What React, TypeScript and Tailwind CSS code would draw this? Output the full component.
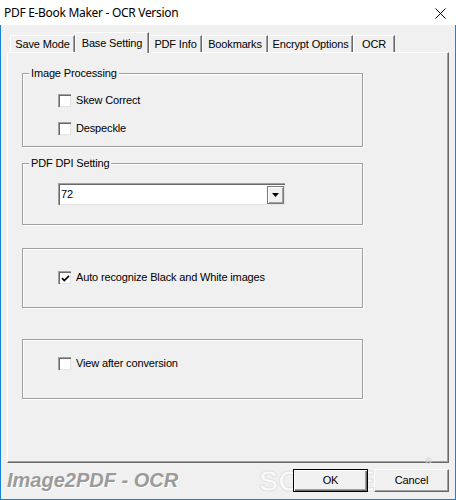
import React from 'react';

const tabs = [
  { label: 'Save Mode', w: 'w-[65px]' },
  { label: 'Base Setting', w: 'w-[74px]', active: true },
  { label: 'PDF Info', w: 'w-[53px]' },
  { label: 'Bookmarks', w: 'w-[66px]' },
  { label: 'Encrypt Options', w: 'w-[85px]' },
  { label: 'OCR', w: 'w-[42px]' },
];

const Group: React.FC<{ label?: string; className: string; children: React.ReactNode }> = ({ label, className, children }) => (
  <div className={`relative w-[341px] border border-[#a0a0a0] shadow-[1px_1px_0_#fff,inset_1px_1px_0_#fff] ${className}`}>
    {label && (
      <span className="absolute left-[6px] -top-[7px] px-[2px] bg-[#f0f0f0] leading-[13px]">{label}</span>
    )}
    {children}
  </div>
);

const CheckBox: React.FC<{ label: string; checked?: boolean; className?: string }> = ({ label, checked, className = '' }) => (
  <div className={`flex items-center h-[13px] gap-[5px] ${className}`}>
    <div className="w-[13px] h-[13px] bg-white border-t border-l border-[#a0a0a0] border-r-white border-b-white shadow-[inset_1px_1px_0_#696969,inset_-1px_-1px_0_#e3e3e3] flex items-center justify-center">
      {checked && (
        <svg width="9" height="9" viewBox="0 0 9 9">
          <path d="M1 4.2 L3.3 6.6 L8 1.8" fill="none" stroke="#000" strokeWidth="1.7" />
        </svg>
      )}
    </div>
    <span className="leading-[13px]">{label}</span>
  </div>
);

export default function App() {
  return (
    <div className="w-[456px] h-[500px] flex flex-col bg-white text-[11px] tracking-[-0.15px] text-black font-['Liberation_Sans',Arial,sans-serif]">
      {/* title bar */}
      <div className="h-[25px] flex items-center justify-between pl-[4px] pr-[10px]">
        <span className="text-[12px] tracking-[-0.3px] font-['Noto_Sans',sans-serif] text-black">PDF E-Book Maker - OCR Version</span>
        <svg width="11" height="11" viewBox="0 0 11 11" className="mt-[1px]">
          <path d="M0.5 0.5 L10.5 10.5 M10.5 0.5 L0.5 10.5" stroke="#000" strokeWidth="1" />
        </svg>
      </div>

      <div className="flex-1 flex flex-col bg-[#f0f0f0] border-x border-b border-[#1883d7] px-[6px] pt-[7px]">
        {/* tabs */}
        <div className="h-[20px] flex items-end pl-[3px]">
          {tabs.map(t =>
            t.active ? (
              <div
                key={t.label}
                className={`${t.w} h-[21px] -mb-px relative z-10 flex items-center justify-center bg-[#f0f0f0] border-t border-l border-white border-r border-r-[#696969] shadow-[inset_-1px_0_0_#a0a0a0]`}
              >
                {t.label}
              </div>
            ) : (
              <div
                key={t.label}
                className={`${t.w} h-[17px] flex items-center justify-center border-t border-l border-white border-r border-r-[#696969] shadow-[inset_-1px_0_0_#a0a0a0]`}
              >
                {t.label}
              </div>
            )
          )}
        </div>

        {/* tab panel */}
        <div className="h-[411px] border-t border-l border-white border-r border-b border-r-[#696969] border-b-[#696969] shadow-[inset_-1px_-1px_0_#a0a0a0] pl-[14px] pt-[20px]">
          <Group label="Image Processing" className="h-[74px] pt-[20px] pl-[35px]">
            <CheckBox label="Skew Correct" />
            <CheckBox label="Despeckle" className="mt-[15px]" />
          </Group>

          <Group label="PDF DPI Setting" className="h-[62px] mt-[16px] pt-[19px] pl-[35px]">
            <div className="w-[227px] h-[22px] bg-white border-t border-l border-[#a0a0a0] border-r-white border-b-white shadow-[inset_1px_1px_0_#696969,inset_-1px_-1px_0_#e3e3e3] flex items-center justify-between pl-[2px] pr-[1px]">
              <span className="leading-[13px]">72</span>
              <div className="w-[17px] h-[18px] bg-[#f0f0f0] border border-[#7a7a7a] shadow-[inset_1px_1px_0_#fff,inset_-1px_-1px_0_#a0a0a0] flex items-center justify-center">
                <svg width="7" height="4" viewBox="0 0 7 4">
                  <path d="M0 0 H7 L3.5 4 Z" fill="#000" />
                </svg>
              </div>
            </div>
          </Group>

          <Group className="h-[60px] mt-[23px] pt-[22px] pl-[35px]">
            <CheckBox label="Auto recognize Black and White images" checked />
          </Group>

          <Group className="h-[60px] mt-[31px] pt-[17px] pl-[35px]">
            <CheckBox label="View after conversion" />
          </Group>
        </div>

        {/* bottom bar */}
        <div className="relative mt-[6px] flex items-center justify-between">
          <span className="text-[20px] tracking-[0px] font-bold italic text-[#9b9b9b] leading-[23px] [text-shadow:1px_1px_0_#fff]">
            Image2PDF - OCR
          </span>
          <span className="pointer-events-none absolute left-[252px] -top-[4px] text-[29px] font-bold leading-[32px] tracking-[0px] text-white/70 [-webkit-text-stroke:1px_#e2e2e2]">
            SOFTPEDIA
            <sup className="text-[9px] text-[#d6d6d6] [-webkit-text-stroke:0px] align-top">®</sup>
          </span>
          <div className="relative z-10 flex gap-[6px]">
            <button className="w-[75px] h-[23px] bg-[#f0f0f0] border border-black shadow-[inset_1px_1px_0_#fff,inset_-1px_-1px_0_#696969,inset_-2px_-2px_0_#a0a0a0] text-[11px]">
              OK
            </button>
            <button className="w-[75px] h-[23px] bg-[#f0f0f0] border-t border-l border-white border-r border-b border-r-[#696969] border-b-[#696969] shadow-[inset_-1px_-1px_0_#a0a0a0] text-[11px]">
              Cancel
            </button>
          </div>
        </div>
      </div>
    </div>
  );
}
